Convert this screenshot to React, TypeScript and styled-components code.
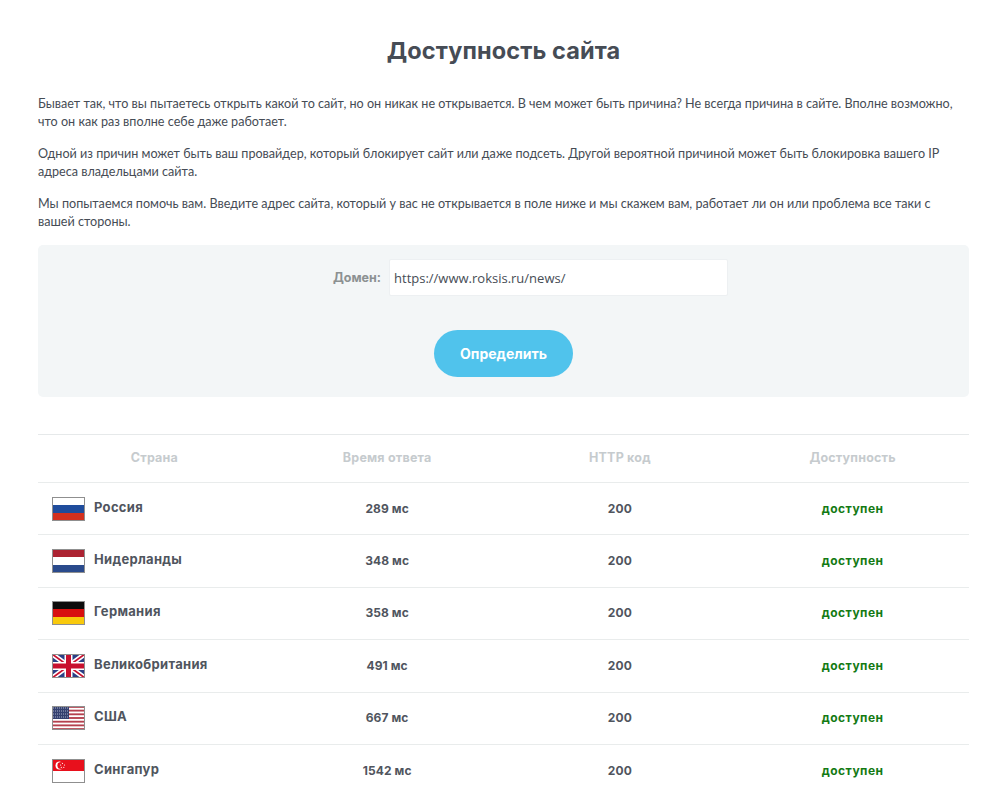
import React from 'react';
import styled, { createGlobalStyle } from 'styled-components';

const GlobalStyle = createGlobalStyle`
  html, body {
    margin: 0;
    padding: 0;
    background: #fff;
  }

  body {
    font-family: Lato, "Open Sans", "Liberation Sans", sans-serif;
    color: #464c55;
  }
`;

const Page = styled.div`
  box-sizing: border-box;
  height: 794px;
  overflow: hidden;
  padding: 37px 31px 0 38px;
`;

const Title = styled.h1`
  margin: 0 0 31px;
  font: 700 23.5px/27px Inter, "Liberation Sans", sans-serif;
  letter-spacing: 0.1px;
  text-align: center;
  color: #464c55;
`;

const Paragraph = styled.p`
  margin: 0 0 14px;
  font-size: 12.6px;
  line-height: 18px;
  color: #464c55;
`;

const FormPanel = styled.form`
  box-sizing: border-box;
  height: 152px;
  margin-top: 14px;
  padding-top: 14px;
  border-radius: 5px;
  background: #f3f6f7;
`;

const FieldRow = styled.div`
  display: flex;
  align-items: center;
  justify-content: center;
  gap: 8px;
  padding-left: 54px;
`;

const FieldLabel = styled.label`
  padding-top: 1px;
  font: 700 12.5px/1 Inter, "Liberation Sans", sans-serif;
  color: #8c9192;
`;

const DomainInput = styled.input`
  box-sizing: border-box;
  width: 339px;
  height: 37px;
  padding: 0 4px;
  border: 1px solid #edf0f2;
  border-radius: 2px;
  outline: none;
  background: #fff;
  font-family: "Open Sans", sans-serif;
  font-size: 13px;
  color: #464c55;
`;

const ButtonRow = styled.div`
  display: flex;
  justify-content: center;
  margin-top: 34px;
`;

const SubmitButton = styled.button`
  width: 139px;
  height: 47px;
  border: 0;
  border-radius: 24px;
  background: #50c3ec;
  font: 700 14px/1 Inter, "Liberation Sans", sans-serif;
  color: #fff;
`;

const Table = styled.div`
  margin-top: 37px;
  border-top: 1px solid #e6e9ea;
`;

const Row = styled.div<{ $head?: boolean }>`
  box-sizing: border-box;
  display: grid;
  grid-template-columns: repeat(4, 1fr);
  align-items: center;
  height: ${({ $head }) => ($head ? '48px' : '52.4px')};
  border-bottom: 1px solid #e9ecec;
`;

const HeadCell = styled.div`
  font: 700 12.5px/1 Inter, "Liberation Sans", sans-serif;
  letter-spacing: 0.2px;
  text-align: center;
  color: #c6cbce;
`;

const CountryCell = styled.div`
  display: flex;
  align-items: center;
  gap: 9px;
  padding-left: 14px;
`;

const CountryName = styled.span`
  margin-bottom: 3px;
  font: 700 13px/1 Inter, "Liberation Sans", sans-serif;
  letter-spacing: 0.3px;
  color: #50555e;
`;

const Cell = styled.div<{ $ok?: boolean }>`
  font: 700 12px/1 Inter, "Liberation Sans", sans-serif;
  letter-spacing: ${({ $ok }) => ($ok ? '0.5px' : '0.1px')};
  text-align: center;
  color: ${({ $ok }) => ($ok ? '#147a14' : '#50555e')};
`;

const FlagFrame = styled.svg`
  display: block;
  flex: none;
  width: 33px;
  height: 24px;
`;

const Flag: React.FC<{ children: React.ReactNode }> = ({ children }) => (
  <FlagFrame viewBox='0 0 33 24'>
    {children}
    <rect
      fill='none'
      height='23'
      stroke='#8f8f8f'
      width='32'
      x='0.5'
      y='0.5'
    />
  </FlagFrame>
);

const Stripes: React.FC<{ colors: string[] }> = ({ colors }) => (
  <>
    {colors.map((color, i) => (
      <rect
        fill={color}
        height='8'
        key={color}
        width='33'
        y={i * 8}
      />
    ))}
  </>
);

const UsaStripes = [0, 1, 2, 3, 4, 5, 6];

const flags: Record<string, React.ReactNode> = {
  de: <Stripes colors={['#0c0c0c', '#d80f0f', '#f8c90c']} />,
  nl: <Stripes colors={['#ac2332', '#ffffff', '#2a4a8c']} />,
  ru: <Stripes colors={['#ffffff', '#1f4c9c', '#d3301f']} />,
  sg: (
    <>
      <rect
        fill='#ffffff'
        height='24'
        width='33'
      />
      <rect
        fill='#e8101c'
        height='12'
        width='33'
      />
      <circle
        cx='7.5'
        cy='6.5'
        fill='#ffffff'
        r='4'
      />
      <circle
        cx='9'
        cy='6.5'
        fill='#e8101c'
        r='3.6'
      />
      <circle
        cx='10.5'
        cy='4.5'
        fill='#ffffff'
        r='0.6'
      />
      <circle
        cx='12.5'
        cy='6'
        fill='#ffffff'
        r='0.6'
      />
      <circle
        cx='11.8'
        cy='8.3'
        fill='#ffffff'
        r='0.6'
      />
      <circle
        cx='9.3'
        cy='8.3'
        fill='#ffffff'
        r='0.6'
      />
      <circle
        cx='8.6'
        cy='6'
        fill='#ffffff'
        r='0.6'
      />
    </>
  ),
  uk: (
    <>
      <rect
        fill='#2a3f86'
        height='24'
        width='33'
      />
      <path
        d='M0 0L33 24M33 0L0 24'
        stroke='#ffffff'
        strokeWidth='5'
      />
      <path
        d='M0 0L33 24M33 0L0 24'
        stroke='#c8102e'
        strokeWidth='1.8'
      />
      <path
        d='M16.5 0V24M0 12H33'
        stroke='#ffffff'
        strokeWidth='8'
      />
      <path
        d='M16.5 0V24M0 12H33'
        stroke='#c8102e'
        strokeWidth='5'
      />
    </>
  ),
  us: (
    <>
      <rect
        fill='#ffffff'
        height='24'
        width='33'
      />
      {UsaStripes.map((i) => (
        <rect
          fill='#b5404e'
          height='1.85'
          key={i}
          width='33'
          y={i * 3.69}
        />
      ))}
      <rect
        fill='#34406f'
        height='13'
        width='17'
      />
      <path
        d='M1 2H16M1 5H16M1 8H16M1 11H16'
        stroke='#aab0c8'
        strokeDasharray='1 1'
      />
    </>
  )
};

interface Country {
  code: string;
  name: string;
  time: string;
}

const countries: Country[] = [
  { code: 'ru', name: 'Россия', time: '289 мс' },
  { code: 'nl', name: 'Нидерланды', time: '348 мс' },
  { code: 'de', name: 'Германия', time: '358 мс' },
  { code: 'uk', name: 'Великобритания', time: '491 мс' },
  { code: 'us', name: 'США', time: '667 мс' },
  { code: 'sg', name: 'Сингапур', time: '1542 мс' }
];

const App: React.FC = () => (
  <Page>
    <GlobalStyle />
    <Title>Доступность сайта</Title>
    <Paragraph>
      Бывает так, что вы пытаетесь открыть какой то сайт, но он никак не открывается. В чем может быть причина? Не всегда причина в сайте. Вполне возможно, что он как раз вполне себе даже работает.
    </Paragraph>
    <Paragraph>
      Одной из причин может быть ваш провайдер, который блокирует сайт или даже подсеть. Другой вероятной причиной может быть блокировка вашего IP адреса владельцами сайта.
    </Paragraph>
    <Paragraph>
      Мы попытаемся помочь вам. Введите адрес сайта, который у вас не открывается в поле ниже и мы скажем вам, работает ли он или проблема все таки с вашей стороны.
    </Paragraph>
    <FormPanel>
      <FieldRow>
        <FieldLabel>Домен:</FieldLabel>
        <DomainInput
          defaultValue='https://www.roksis.ru/news/'
          type='text'
        />
      </FieldRow>
      <ButtonRow>
        <SubmitButton type='button'>Определить</SubmitButton>
      </ButtonRow>
    </FormPanel>
    <Table>
      <Row $head>
        <HeadCell>Страна</HeadCell>
        <HeadCell>Время ответа</HeadCell>
        <HeadCell>HTTP код</HeadCell>
        <HeadCell>Доступность</HeadCell>
      </Row>
      {countries.map((country) => (
        <Row key={country.code}>
          <CountryCell>
            <Flag>{flags[country.code]}</Flag>
            <CountryName>{country.name}</CountryName>
          </CountryCell>
          <Cell>{country.time}</Cell>
          <Cell>200</Cell>
          <Cell $ok>доступен</Cell>
        </Row>
      ))}
    </Table>
  </Page>
);

export default App;
